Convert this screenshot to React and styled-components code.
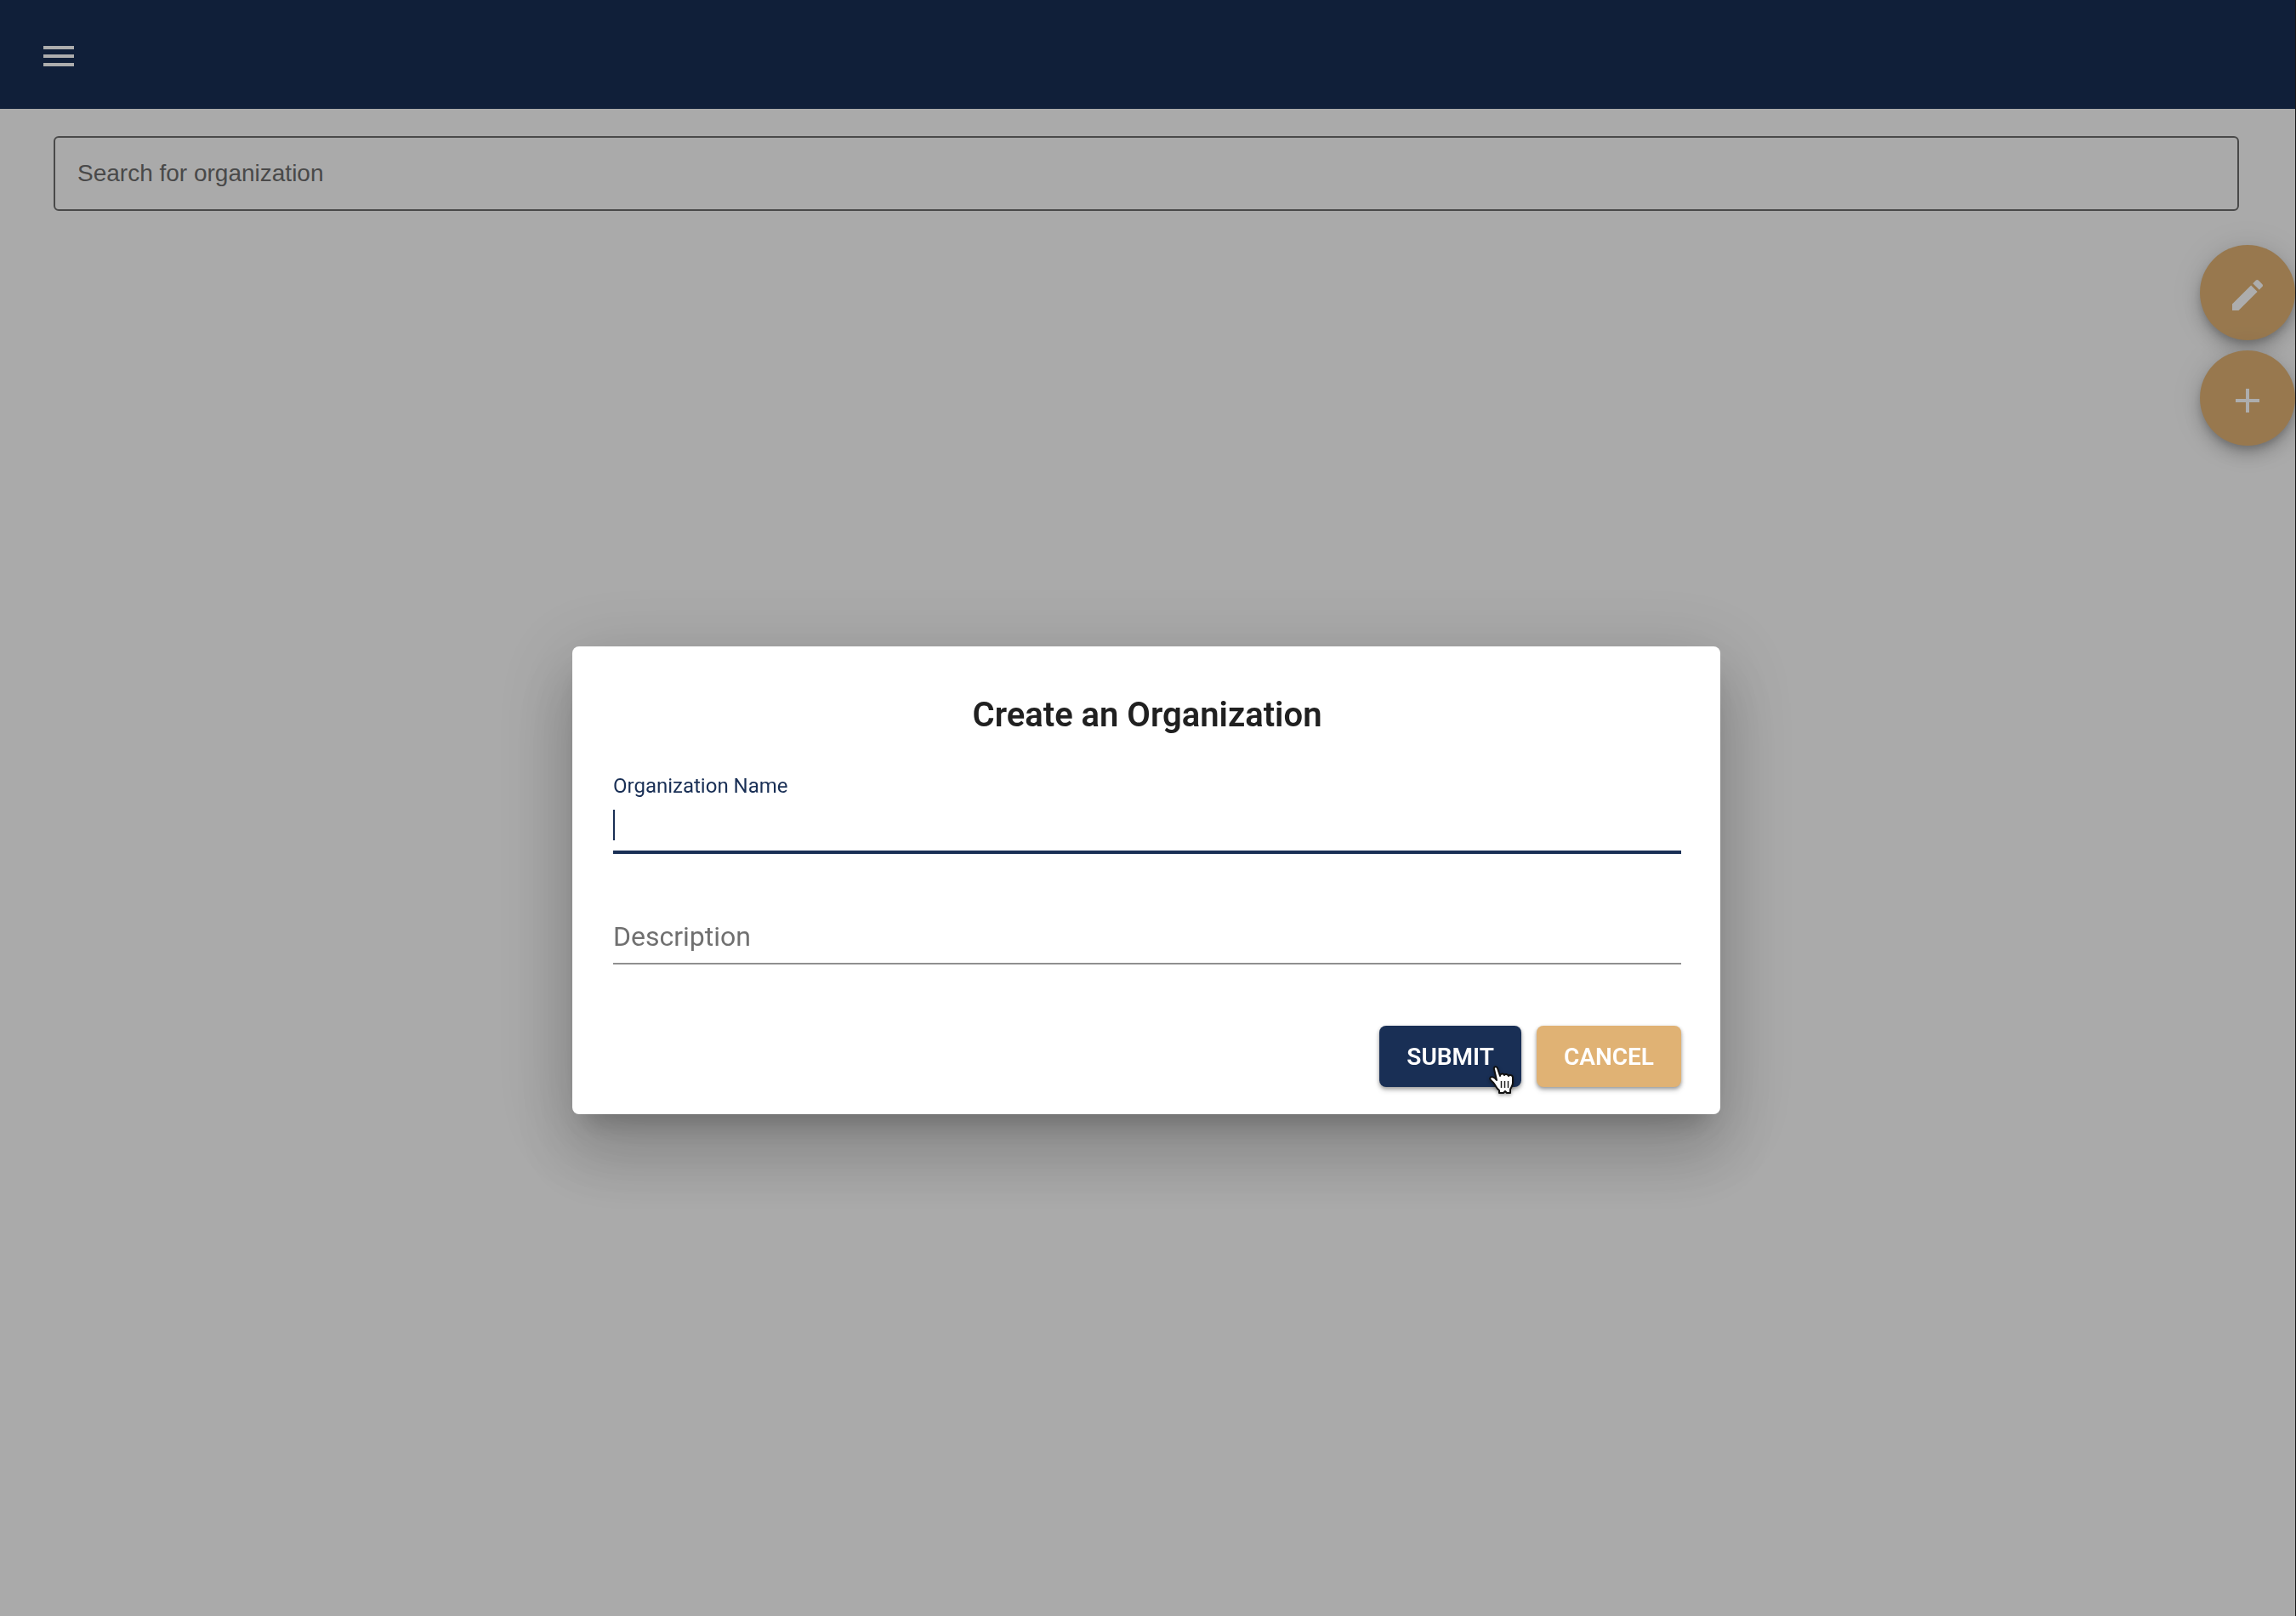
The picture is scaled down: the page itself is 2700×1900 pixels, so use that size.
import React from "react";
import styled, { createGlobalStyle } from "styled-components";

const navy = "#192f55";
const tan = "#e0b274";
const roboto = `Roboto, "Liberation Sans", sans-serif`;

const GlobalStyle = createGlobalStyle`
  *, *::before, *::after { box-sizing: border-box; }
  html, body { margin: 0; background: #fbfbfb; }
  body { font-family: ${roboto}; }
`;

const Page = styled.div`
  min-height: 100vh;
  border-right: 1px solid #222;
  background: #fbfbfb;
`;

const TopBar = styled.header`
  display: flex;
  align-items: center;
  height: 128px;
  padding: 4px 45px 0;
  background: ${navy};
`;

const IconButton = styled.button`
  display: flex;
  padding: 0;
  border: 0;
  background: none;
  color: #fff;
`;

const Icon = styled.svg`
  display: block;
  width: 48px;
  height: 48px;
  fill: currentColor;
`;

const SearchArea = styled.main`
  display: flex;
  padding: 32px 66px 0 63px;
`;

const SearchInput = styled.input`
  flex: 1;
  min-width: 0;
  height: 88px;
  padding: 0 26px;
  border: 2px solid #6c6c6c;
  border-radius: 6px;
  background: transparent;
  font: 28px "Liberation Sans", Arial, sans-serif;
  color: #222;
  &::placeholder { color: #6c6c6c; opacity: 1; }
`;

const FabColumn = styled.div`
  display: flex;
  flex-direction: column;
  align-items: flex-end;
  gap: 12px;
  padding-top: 40px;
`;

const Fab = styled.button`
  display: flex;
  align-items: center;
  justify-content: center;
  width: 112px;
  height: 112px;
  padding: 6px 0 0;
  border: 0;
  border-radius: 50%;
  background: ${tan};
  color: #fff;
  box-shadow: 0 6px 10px -2px rgba(0, 0, 0, 0.2), 0 12px 20px rgba(0, 0, 0, 0.14),
    0 2px 36px rgba(0, 0, 0, 0.12);
`;

const Overlay = styled.div`
  position: fixed;
  inset: 0;
  display: flex;
  align-items: flex-start;
  justify-content: center;
  padding: 40vh 4px 0 0;
  background: rgba(0, 0, 0, 0.32);
`;

const Dialog = styled.form`
  width: 50vw;
  min-width: 640px;
  padding: 48px 46px 32px 48px;
  border-radius: 8px;
  background: #fff;
  box-shadow: 0 22px 30px -14px rgba(0, 0, 0, 0.2), 0 48px 76px 6px rgba(0, 0, 0, 0.14),
    0 18px 92px 16px rgba(0, 0, 0, 0.12);
`;

const Title = styled.h2`
  margin: 0 0 36px;
  font-size: 40px;
  font-weight: 600;
  line-height: 66px;
  text-align: center;
  color: #202020;
`;

const Field = styled.div`
  display: flex;
  flex-direction: column;
  margin-bottom: ${(p) => p.$gap}px;
`;

const Label = styled.label`
  font-size: 24px;
  line-height: 28px;
  color: ${navy};
`;

const TextInput = styled.input`
  height: ${(p) => (p.$active ? 66 : 64)}px;
  padding: 0;
  border: 0;
  border-bottom: ${(p) => (p.$active ? `4px solid ${navy}` : "2px solid #8f8f8f")};
  outline: 0;
  background: ${(p) =>
    p.$active ? `linear-gradient(${navy}, ${navy}) 0 14px / 2px 36px no-repeat` : "transparent"};
  font: 32px ${roboto};
  color: #202020;
  &::placeholder { color: #707070; opacity: 1; }
`;

const Actions = styled.div`
  display: flex;
  justify-content: flex-end;
  gap: 18px;
`;

const Button = styled.button`
  position: relative;
  height: 72px;
  padding: 0 32px;
  border: 0;
  border-radius: 8px;
  background: ${(p) => (p.$primary ? navy : tan)};
  font: 600 28px ${roboto};
  text-transform: uppercase;
  color: #fff;
  box-shadow: 0 2px 4px rgba(0, 0, 0, 0.3), 0 4px 6px rgba(0, 0, 0, 0.16);
`;

const Pointer = styled.svg`
  position: absolute;
  right: 6px;
  bottom: -10px;
  width: 32px;
  height: 36px;
  filter: drop-shadow(0 2px 2px rgba(0, 0, 0, 0.35));
`;

export default function App() {
  return (
    <>
      <GlobalStyle />
      <Page>
        <TopBar>
          <IconButton type="button" aria-label="Menu">
            <Icon viewBox="0 0 24 24">
              <path d="M3 18h18v-2H3v2zm0-5h18v-2H3v2zm0-7v2h18V6H3z" />
            </Icon>
          </IconButton>
        </TopBar>
        <SearchArea>
          <SearchInput
            type="text"
            aria-label="Search for organization"
            placeholder="Search for organization"
          />
        </SearchArea>
        <FabColumn>
          <Fab type="button" aria-label="Edit">
            <Icon viewBox="0 0 24 24">
              <path d="M3 17.25V21h3.75L17.81 9.94l-3.75-3.75L3 17.25zM20.71 7.04c.39-.39.39-1.02 0-1.41l-2.34-2.34c-.39-.39-1.02-.39-1.41 0l-1.83 1.83 3.75 3.75 1.83-1.83z" />
            </Icon>
          </Fab>
          <Fab type="button" aria-label="Add">
            <Icon viewBox="0 0 24 24">
              <path d="M19 13h-6v6h-2v-6H5v-2h6V5h2v6h6v2z" />
            </Icon>
          </Fab>
        </FabColumn>
      </Page>
      <Overlay>
        <Dialog role="dialog" aria-labelledby="dialog-title">
          <Title id="dialog-title">Create an Organization</Title>
          <Field $gap={66}>
            <Label htmlFor="org-name">Organization Name</Label>
            <TextInput id="org-name" type="text" $active />
          </Field>
          <Field $gap={72}>
            <TextInput type="text" aria-label="Description" placeholder="Description" />
          </Field>
          <Actions>
            <Button type="button" $primary>
              Submit
              <Pointer viewBox="0 0 32 36" aria-hidden="true">
                <path
                  d="M6 5C5 2 9 1 10 4L13 13C13 10 17 10 18 12C19 10 22 11 23 13C24 11 28 12 28 15V21C28 25 26 26 25 29V33H21L19 31L17 33H12V30C9 28 8 25 6 22C4 19 1 18 1 16C2 13 6 14 9 18Z"
                  fill="#fff"
                  stroke="#111"
                  strokeWidth="2"
                  strokeLinejoin="round"
                />
                <path d="M14.500 19v8M18.500 19v8M22.500 19v8" fill="none" stroke="#222" strokeWidth="1.500" />
              </Pointer>
            </Button>
            <Button type="button">Cancel</Button>
          </Actions>
        </Dialog>
      </Overlay>
    </>
  );
}
